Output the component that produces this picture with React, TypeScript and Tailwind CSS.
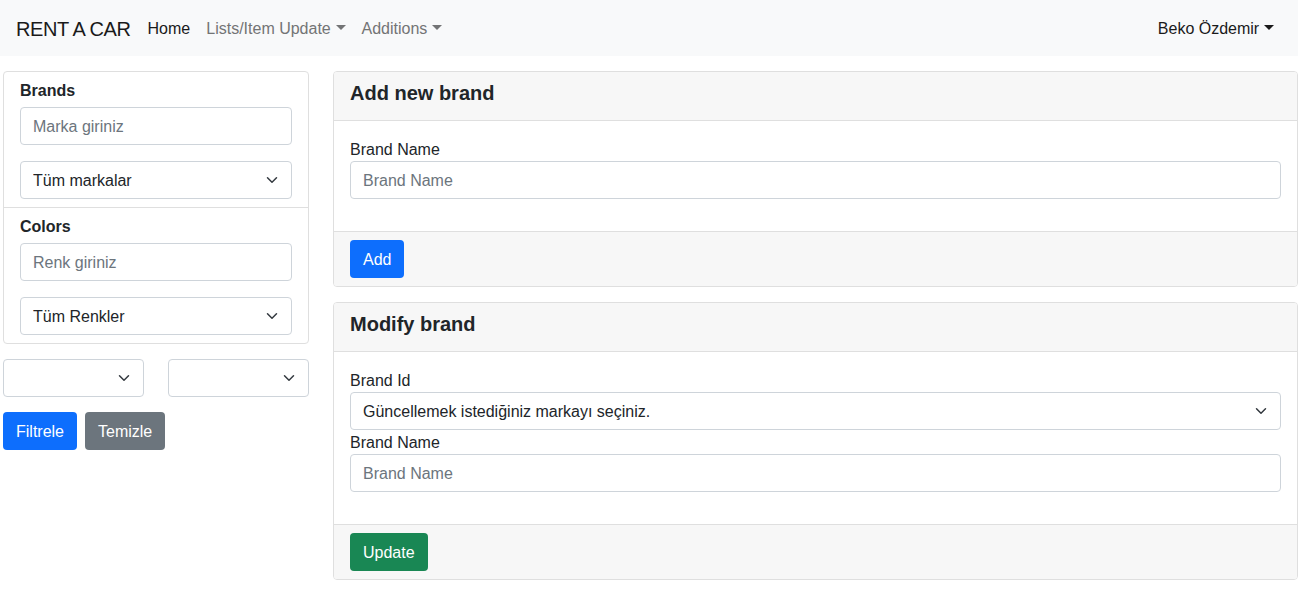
import React from "react";

const font = { fontFamily: '"Segoe UI", "Liberation Sans", Arial, sans-serif' };

function Caret() {
  return (
    <span className="inline-block ml-[0.3em] align-[0.22em] w-0 h-0 border-t-[5px] border-t-current border-x-[5px] border-x-transparent border-b-0" />
  );
}

function Chevron() {
  return (
    <svg
      className="absolute right-3 top-1/2 -translate-y-1/2 w-4 h-3 pointer-events-none"
      viewBox="0 0 16 16"
      fill="none"
      stroke="#343a40"
      strokeWidth="2"
      strokeLinecap="round"
      strokeLinejoin="round"
    >
      <path d="m2 5 6 6 6-6" />
    </svg>
  );
}

function Select({ value, className = "" }: { value: string; className?: string }) {
  return (
    <div className={"relative " + className}>
      <select
        className="block w-full h-[38px] appearance-none bg-white border border-[#ced4da] rounded-[4px] pl-3 pr-9 pt-px text-[16px] leading-6 text-[#212529] outline-none"
        style={font}
        defaultValue={value}
      >
        <option value={value}>{value}</option>
      </select>
      <Chevron />
    </div>
  );
}

function Input({ placeholder, className = "" }: { placeholder: string; className?: string }) {
  return (
    <input
      className={
        "block w-full h-[38px] bg-white border border-[#ced4da] rounded-[4px] px-3 pt-px text-[16px] leading-6 text-[#212529] placeholder:text-[#6c757d] outline-none " +
        className
      }
      style={font}
      placeholder={placeholder}
    />
  );
}

function Btn({ children, color }: { children: React.ReactNode; color: string }) {
  return (
    <button
      className={
        "h-[38px] px-3 pt-px rounded-[4px] text-white text-[16px] leading-6 border border-transparent " + color
      }
      style={font}
    >
      {children}
    </button>
  );
}

function Card({
  title,
  children,
  footer,
}: {
  title: string;
  children: React.ReactNode;
  footer: React.ReactNode;
}) {
  return (
    <div className="border border-[#dfdfdf] rounded-[4px] bg-white overflow-hidden">
      <div className="bg-[#f7f7f7] border-b border-[#dfdfdf] px-4 pt-[9px] pb-[7px]">
        <h5 className="text-[20px] leading-6 font-semibold text-[#212529] mb-2">{title}</h5>
      </div>
      <div className="p-4">{children}</div>
      <div className="bg-[#f7f7f7] border-t border-[#dfdfdf] px-4 py-2">{footer}</div>
    </div>
  );
}

export default function App() {
  return (
    <div className="w-[1298px] bg-white text-[#212529] text-[16px] leading-6" style={font}>
      <nav className="h-14 bg-[#f8f9fa] flex items-center justify-between px-4 pt-0.5">
        <div className="flex items-center">
          <span className="text-[20px] leading-[30px] text-[#1a1a1a] tracking-[-0.4px] mr-[9px]">RENT A CAR</span>
          <div className="flex items-center">
            <span className="px-2 py-2 text-[#1a1a1a]">Home</span>
            <span className="px-2 py-2 text-[#737475]">
              Lists/Item Update
              <Caret />
            </span>
            <span className="px-2 py-2 text-[#737475]">
              Additions
              <Caret />
            </span>
          </div>
        </div>
        <span className="px-2 py-2 text-[#1a1a1a]">
          Beko Özdemir
          <Caret />
        </span>
      </nav>

      <div className="flex gap-6 pl-[3px] mt-[15px]">
        <div className="w-[306px]">
          <div className="border border-[#dfdfdf] rounded-[4px] bg-white">
            <div className="px-4 pt-[9px] pb-2 border-b border-[#dfdfdf]">
              <h6 className="text-[16px] leading-[19px] font-semibold mb-[7px]">Brands</h6>
              <Input placeholder="Marka giriniz" className="mb-4" />
              <Select value="Tüm markalar" />
            </div>
            <div className="px-4 pt-[9px] pb-2">
              <h6 className="text-[16px] leading-[19px] font-semibold mb-[7px]">Colors</h6>
              <Input placeholder="Renk giriniz" className="mb-4" />
              <Select value="Tüm Renkler" />
            </div>
          </div>
          <div className="flex justify-between mt-[15px]">
            <Select value="" className="w-[141px]" />
            <Select value="" className="w-[141px]" />
          </div>
          <div className="flex gap-2 mt-[15px]">
            <Btn color="bg-[#0d6efd]">Filtrele</Btn>
            <Btn color="bg-[#6c757d]">Temizle</Btn>
          </div>
        </div>

        <div className="w-[965px] flex flex-col gap-[15px]">
          <Card title="Add new brand" footer={<Btn color="bg-[#0d6efd]">Add</Btn>}>
            <label className="block pt-px -mb-px">Brand Name</label>
            <Input placeholder="Brand Name" className="mb-4" />
          </Card>
          <Card title="Modify brand" footer={<Btn color="bg-[#198754]">Update</Btn>}>
            <label className="block pt-px -mb-px">Brand Id</label>
            <Select value="Güncellemek istediğiniz markayı seçiniz." />
            <label className="block pt-px -mb-px">Brand Name</label>
            <Input placeholder="Brand Name" className="mb-4" />
          </Card>
        </div>
      </div>
    </div>
  );
}
